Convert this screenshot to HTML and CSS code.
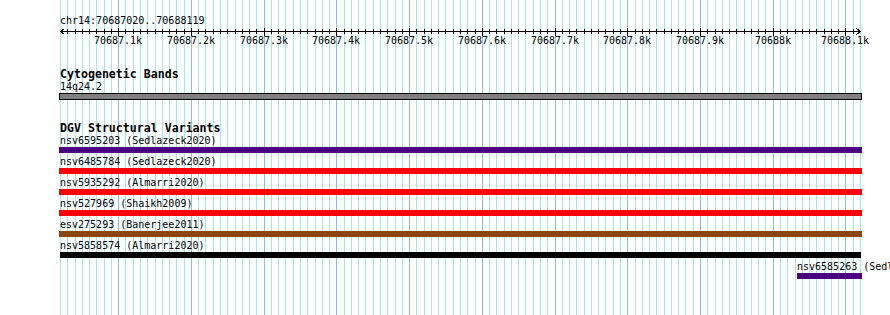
FILE: index.html
```html
<!DOCTYPE html>
<html lang="en">
<head>
  <meta charset="UTF-8">
  <title>chr14:70687020..70688119</title>
  <meta name="viewport" content="width=device-width, initial-scale=1">
  <link rel="stylesheet" href="styles.css">
</head>
<body>
  <div class="panel">
    <svg class="grid" id="grid" width="890" height="315"></svg>

    <div class="content">
      <div class="ref">chr14:70687020..70688119</div>

      <svg class="ruler" id="ruler" width="890" height="41">
        <g class="ruler-labels">
          <text x="118" y="17">70687.1k</text>
          <text x="191" y="17">70687.2k</text>
          <text x="264" y="17">70687.3k</text>
          <text x="336" y="17">70687.4k</text>
          <text x="409" y="17">70687.5k</text>
          <text x="482" y="17">70687.6k</text>
          <text x="555" y="17">70687.7k</text>
          <text x="627" y="17">70687.8k</text>
          <text x="700" y="17">70687.9k</text>
          <text x="773" y="17">70688k</text>
          <text x="845" y="17">70688.1k</text>
        </g>
      </svg>

      <div class="track cyto">
        <div class="track-title">Cytogenetic Bands</div>
        <div class="feature">
          <div class="label">14q24.2</div>
          <div class="bar band"></div>
        </div>
      </div>

      <div class="track dgv">
        <div class="track-title">DGV Structural Variants</div>
        <div class="feature">
          <div class="label">nsv6595203 (Sedlazeck2020)</div>
          <div class="bar indigo"></div>
        </div>
        <div class="feature">
          <div class="label">nsv6485784 (Sedlazeck2020)</div>
          <div class="bar red"></div>
        </div>
        <div class="feature">
          <div class="label">nsv5935292 (Almarri2020)</div>
          <div class="bar red"></div>
        </div>
        <div class="feature">
          <div class="label">nsv527969 (Shaikh2009)</div>
          <div class="bar red"></div>
        </div>
        <div class="feature">
          <div class="label">esv275293 (Banerjee2011)</div>
          <div class="bar brown"></div>
        </div>
        <div class="feature">
          <div class="label">nsv5858574 (Almarri2020)</div>
          <div class="bar black"></div>
        </div>
        <div class="feature short">
          <div class="label">nsv6585263 (Sedlazeck2020)</div>
          <div class="bar indigo"></div>
        </div>
      </div>
    </div>
  </div>

  <script>
    // 10bp per grid column, 1100bp across 800px starting at x=60
    const NS = "http://www.w3.org/2000/svg";
    const grid = document.getElementById("grid");
    const ruler = document.getElementById("ruler");

    function px(k) { return Math.round(60 + k * 800 / 110); }

    function add(parent, tag, attrs) {
      const el = document.createElementNS(NS, tag);
      for (const a in attrs) el.setAttribute(a, attrs[a]);
      parent.appendChild(el);
      return el;
    }

    for (let k = 0; k <= 110; k++) {
      const x = px(k);
      const major = (k - 8) % 10 === 0;
      add(grid, "rect", { x: x, y: 0, width: 1, height: 315, class: major ? "major" : "minor" });
      if (k > 0 && k < 110) {
        add(ruler, "rect", {
          x: x, y: major ? 1 : 2, width: 1, height: major ? 8 : 5, class: "tick"
        });
      }
    }

    add(ruler, "rect", { x: 60, y: 4, width: 801, height: 1, class: "tick" });
    add(ruler, "path", { d: "M64.5 1.5 L60.5 4.5 L64.5 7.5", class: "arrow" });
    add(ruler, "path", { d: "M856.5 1.5 L860.5 4.5 L856.5 7.5", class: "arrow" });
  </script>
</body>
</html>
```

FILE: styles.css
```css
body {
  margin: 0;
  background: #fff;
  font-family: 'DejaVu Sans Mono', 'Liberation Mono', monospace;
  font-size: 10px;
  color: #000;
}
.panel {
  position: relative;
  width: 890px; height: 315px;
  overflow: hidden;
}
.grid {
  position: absolute; top: 0; left: 0;
  shape-rendering: crispEdges;
}
.grid .minor { fill: #a2e6ee; }
.grid .major { fill: #82c2ea; }
.content {
  position: relative;
  padding-top: 15px;
}
.ref {
  margin-left: 60px;
  line-height: 12px;
  white-space: nowrap;
}
.ruler {
  display: block;
  shape-rendering: crispEdges;
}
.ruler .tick { fill: #000; }
.ruler .arrow { fill: none; stroke: #000; stroke-width: 1; }
.ruler-labels text {
  font-family: 'DejaVu Sans Mono', 'Liberation Mono', monospace;
  font-size: 10px;
  text-anchor: middle;
  fill: #000;
}
.track { margin-left: 60px; }
.track-title {
  font-weight: bold;
  font-size: 11.6px;
  line-height: 13px;
  white-space: nowrap;
}
.dgv { margin-top: 21px; }
.dgv .track-title { line-height: 14px; }
.label {
  line-height: 12px;
  white-space: nowrap;
}
.feature { margin-bottom: 3px; }
.bar {
  height: 6px;
  width: 803px;
  margin-left: -1px;
}
.band {
  height: 7px;
  box-sizing: border-box;
  border: 1px solid #000;
  background: #808080;
}
.indigo { background: #4b0082; }
.red { background: #ff0000; }
.brown { background: #8b4513; }
.black { background: #000; width: 801px; margin-left: 0; }
.short { margin-left: 737px; }
.short .bar { width: 65px; margin-left: 0; }
```
